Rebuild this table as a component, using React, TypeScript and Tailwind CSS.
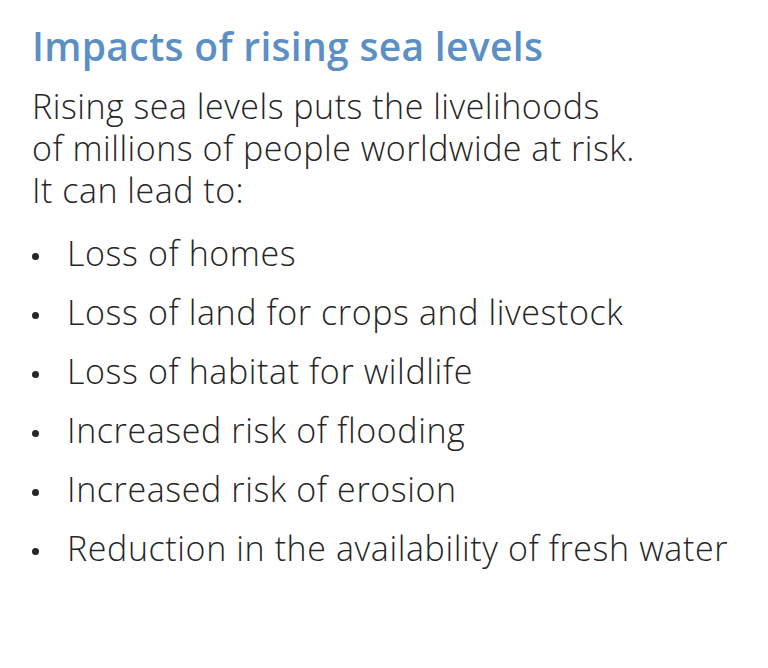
const items = [
  "Loss of homes",
  "Loss of land for crops and livestock",
  "Loss of habitat for wildlife",
  "Increased risk of flooding",
  "Increased risk of erosion",
  "Reduction in the availability of fresh water",
];

export default function App() {
  return (
    <div className="w-[768px] h-[668px] bg-white px-[32px] pt-[22px] font-['Open_Sans',sans-serif] text-[#262626]">
      <h1 className="text-[39px] leading-[48px] font-semibold tracking-[0.3px] text-[#5c8fc3]">
        Impacts of rising sea levels
      </h1>
      <p className="mt-[15px] text-[34px] leading-[42px] font-light tracking-[0.5px]">
        Rising sea levels puts the livelihoods
        <br />
        of millions of people worldwide at risk.
        <br />
        It can lead to:
      </p>
      <ul className="mt-[13px] flex flex-col">
        {items.map((item) => (
          <li key={item} className="flex items-center h-[59px] text-[34px] leading-[59px] font-light tracking-[0.6px]">
            <span className="mt-[5px] mr-[28px] w-[7px] h-[7px] rounded-full bg-[#262626] shrink-0" />
            <span>{item}</span>
          </li>
        ))}
      </ul>
    </div>
  );
}
